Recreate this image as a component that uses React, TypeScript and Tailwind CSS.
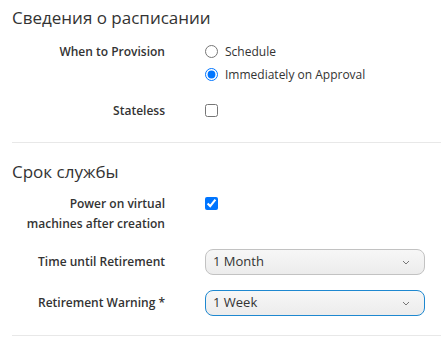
import React from 'react';

const font = { fontFamily: '"Open Sans", "Liberation Sans", sans-serif' };

const Chevron = () => (
  <svg width="8" height="5" viewBox="0 0 8 5" className="text-[#777]">
    <path d="M1 1 L4 4 L7 1" fill="none" stroke="currentColor" strokeWidth="1" />
  </svg>
);

const Select: React.FC<{ value: string; focused?: boolean }> = ({ value, focused }) => (
  <div
    className={`flex h-[26px] w-[220px] items-center justify-between rounded-[8px] border bg-gradient-to-b from-[#f7f7f7] to-[#ececec] pl-[7px] pr-[14px] text-[13px] text-[#333] ${
      focused ? 'border-[#1e88d0]' : 'border-[#c2c2c2]'
    }`}
  >
    <span>{value}</span>
    <Chevron />
  </div>
);

export default function App() {
  return (
    <div className="w-[441px] h-[337px] overflow-hidden bg-white pl-3" style={font}>
      <h2 className="pt-[7px] text-[17px] leading-[22px] text-[#333]">Сведения о расписании</h2>

      <div className="mt-[11px] grid grid-cols-[153px_1fr] gap-x-10">
        <div className="text-right text-[12px] font-semibold leading-[23px] text-[#333]">When to Provision</div>
        <div className="text-[12px] text-[#333]">
          <label className="flex h-[23px] items-center gap-[7px]">
            <input type="radio" name="prov" className="m-0 h-[13px] w-[13px]" />
            Schedule
          </label>
          <label className="flex h-[23px] items-center gap-[7px]">
            <input type="radio" name="prov" defaultChecked className="m-0 h-[13px] w-[13px]" />
            Immediately on Approval
          </label>
        </div>
      </div>

      <div className="mt-[13px] grid grid-cols-[153px_1fr] gap-x-10">
        <div className="text-right text-[12px] font-semibold leading-[23px] text-[#333]">Stateless</div>
        <div className="flex h-[23px] items-center">
          <input type="checkbox" className="m-0 h-[13px] w-[13px]" />
        </div>
      </div>

      <div className="mt-[20px] border-t border-[#e8e8e8]" />

      <h2 className="mt-[18px] text-[17px] leading-[22px] text-[#333]">Срок службы</h2>

      <div className="mt-[11px] grid grid-cols-[153px_1fr] gap-x-10">
        <div className="text-right text-[12px] font-semibold leading-[20px] text-[#333]">
          Power on virtual
          <br />
          machines after creation
        </div>
        <div className="flex h-[18px] items-center">
          <input type="checkbox" defaultChecked className="m-0 h-[13px] w-[13px]" />
        </div>
      </div>

      <div className="mt-[15px] grid grid-cols-[153px_1fr] items-center gap-x-10">
        <div className="text-right text-[12px] font-semibold text-[#333]">Time until Retirement</div>
        <Select value="1 Month" />
      </div>

      <div className="mt-[15px] grid grid-cols-[153px_1fr] items-center gap-x-10">
        <div className="text-right text-[12px] font-semibold text-[#333]">Retirement Warning *</div>
        <Select value="1 Week" focused />
      </div>

      <div className="mt-[19px] border-t border-[#e8e8e8]" />
    </div>
  );
}
